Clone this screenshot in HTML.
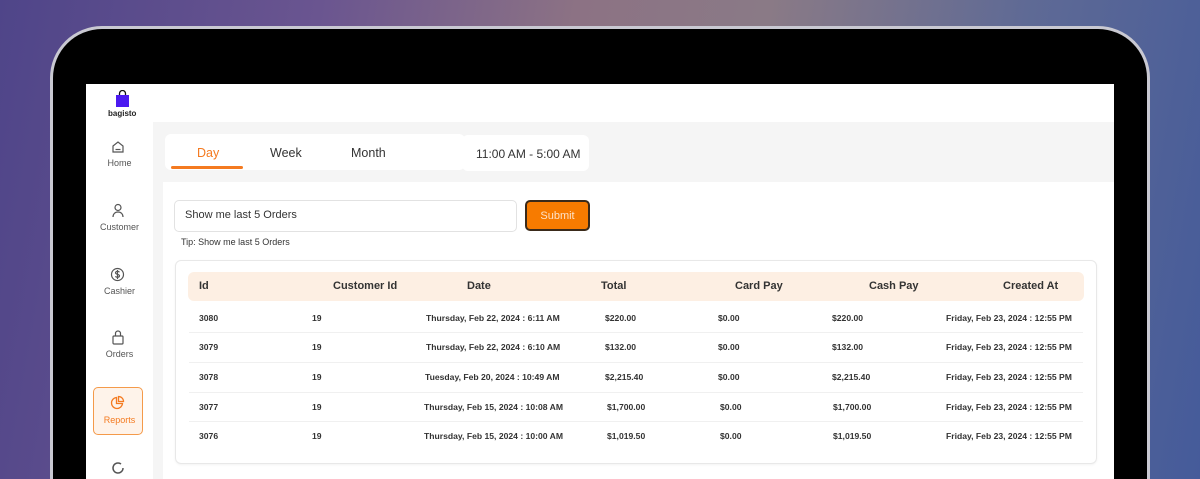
<!DOCTYPE html>
<html style="width:1200px;height:479px;overflow:hidden"><head><meta charset="utf-8"><style>
*{margin:0;padding:0;box-sizing:border-box}
body{width:1200px;height:479px;overflow:hidden;position:relative;font-family:"Liberation Sans",sans-serif;
background:linear-gradient(100deg,#4f4589 0%,#6a5590 25%,#8c7284 45%,#8a7a86 60%,#5f6a95 80%,#455b9a 100%);}
.a{position:absolute;white-space:nowrap}
.bez{left:50px;top:26px;width:1100px;height:453px;border-radius:52px 52px 0 0;background:#000;border:3px solid #c9c9d2;border-bottom:none}
.scr{left:86px;top:84px;width:1028px;height:395px;background:#fff;overflow:hidden}
.th{font-size:11px;font-weight:bold;color:#333}
.td{font-size:8.6px;font-weight:bold;color:#333}
.nav{font-size:9px;color:#555;text-align:center;width:67px}
</style></head><body>
<div class="a bez"></div>
<div class="a scr">
  <div class="a" style="left:29px;top:6px;width:15px;height:16px">
    <svg width="15" height="17" viewBox="0 0 15 17"><path d="M4.5 5V3.5a3 3 0 0 1 6 0V5" stroke="#111" stroke-width="1.3" fill="none"/><rect x="1" y="5" width="13" height="12" fill="#4b1af0"/></svg>
  </div>
  <div class="a" style="left:22px;top:25px;font-size:8px;font-weight:bold;color:#222">bagisto</div>
  <div class="a" style="left:67px;top:38px;width:961px;height:362px;background:#f5f5f5"></div>
  <div class="a" style="left:0;top:38px;width:67px;height:362px;background:#fff"></div>
  <div class="a" style="left:77px;top:98px;width:951px;height:302px;background:#fff"></div>
  <div class="a" style="left:79px;top:50px;width:300px;height:36px;background:#fff;border-radius:6px"></div>
  <div class="a" style="left:376px;top:51px;width:127px;height:36px;background:#fff;border-radius:6px"></div>
  <div class="a" style="left:111px;top:62px;font-size:12.5px;color:#f47a20">Day</div>
  <div class="a" style="left:85px;top:82px;width:72px;height:3px;background:#f47a20;border-radius:2px"></div>
  <div class="a" style="left:184px;top:62px;font-size:12.5px;color:#333">Week</div>
  <div class="a" style="left:265px;top:62px;font-size:12.5px;color:#333">Month</div>
  <div class="a" style="left:390px;top:63px;font-size:12px;color:#333">11:00 AM - 5:00 AM</div>
  <div class="a" style="left:88px;top:116px;width:343px;height:32px;border:1px solid #e2e2e2;border-radius:5px"></div>
  <div class="a" style="left:99px;top:125px;font-size:11px;color:#333">Show me last 5 Orders</div>
  <div class="a" style="left:439px;top:116px;width:65px;height:31px;background:#f77b00;border:2px solid #3a2a1a;border-radius:5px;color:#fde2c8;font-size:11px;text-align:center;line-height:29px">Submit</div>
  <div class="a" style="left:95px;top:153px;font-size:9px;color:#333">Tip: Show me last 5 Orders</div>
  <div class="a" style="left:89px;top:176px;width:922px;height:204px;border:1px solid #e8e8e8;border-radius:6px;box-shadow:0 1px 2px rgba(0,0,0,.05)"></div>
  <div class="a" style="left:102px;top:188px;width:896px;height:29px;background:#fdefe3;border-radius:6px"></div>
  <div class="a th" style="left:113px;top:196px">Id</div>
  <div class="a th" style="left:247px;top:196px">Customer Id</div>
  <div class="a th" style="left:381px;top:196px">Date</div>
  <div class="a th" style="left:515px;top:196px">Total</div>
  <div class="a th" style="left:649px;top:196px">Card Pay</div>
  <div class="a th" style="left:783px;top:196px">Cash Pay</div>
  <div class="a th" style="left:917px;top:196px">Created At</div>

  <div class="a" style="left:103px;top:248px;width:894px;height:1px;background:#f0f0f0"></div>
  <div class="a" style="left:103px;top:278px;width:894px;height:1px;background:#f0f0f0"></div>
  <div class="a" style="left:103px;top:308px;width:894px;height:1px;background:#f0f0f0"></div>
  <div class="a" style="left:103px;top:337px;width:894px;height:1px;background:#f0f0f0"></div>

  <div class="a td" style="left:113px;top:229px">3080</div><div class="a td" style="left:226px;top:229px">19</div><div class="a td" style="left:340px;top:229px">Thursday, Feb 22, 2024 : 6:11 AM</div><div class="a td" style="left:519px;top:229px">$220.00</div><div class="a td" style="left:632px;top:229px">$0.00</div><div class="a td" style="left:746px;top:229px">$220.00</div><div class="a td" style="left:860px;top:229px">Friday, Feb 23, 2024 : 12:55 PM</div>
  <div class="a td" style="left:113px;top:258px">3079</div><div class="a td" style="left:226px;top:258px">19</div><div class="a td" style="left:340px;top:258px">Thursday, Feb 22, 2024 : 6:10 AM</div><div class="a td" style="left:519px;top:258px">$132.00</div><div class="a td" style="left:632px;top:258px">$0.00</div><div class="a td" style="left:746px;top:258px">$132.00</div><div class="a td" style="left:860px;top:258px">Friday, Feb 23, 2024 : 12:55 PM</div>
  <div class="a td" style="left:113px;top:288px">3078</div><div class="a td" style="left:226px;top:288px">19</div><div class="a td" style="left:339px;top:288px">Tuesday, Feb 20, 2024 : 10:49 AM</div><div class="a td" style="left:519px;top:288px">$2,215.40</div><div class="a td" style="left:632px;top:288px">$0.00</div><div class="a td" style="left:746px;top:288px">$2,215.40</div><div class="a td" style="left:860px;top:288px">Friday, Feb 23, 2024 : 12:55 PM</div>
  <div class="a td" style="left:113px;top:318px">3077</div><div class="a td" style="left:226px;top:318px">19</div><div class="a td" style="left:338px;top:318px">Thursday, Feb 15, 2024 : 10:08 AM</div><div class="a td" style="left:521px;top:318px">$1,700.00</div><div class="a td" style="left:634px;top:318px">$0.00</div><div class="a td" style="left:747px;top:318px">$1,700.00</div><div class="a td" style="left:860px;top:318px">Friday, Feb 23, 2024 : 12:55 PM</div>
  <div class="a td" style="left:113px;top:347px">3076</div><div class="a td" style="left:226px;top:347px">19</div><div class="a td" style="left:338px;top:347px">Thursday, Feb 15, 2024 : 10:00 AM</div><div class="a td" style="left:521px;top:347px">$1,019.50</div><div class="a td" style="left:634px;top:347px">$0.00</div><div class="a td" style="left:747px;top:347px">$1,019.50</div><div class="a td" style="left:860px;top:347px">Friday, Feb 23, 2024 : 12:55 PM</div>

  <svg class="a" style="left:25px;top:56px" width="14" height="14" viewBox="0 0 14 14" fill="none" stroke="#555" stroke-width="1.2"><path d="M2 6L7 2l5 4v6H2z"/><path d="M4.5 9.5h5"/></svg>
  <div class="a nav" style="left:0;top:74px">Home</div>
  <svg class="a" style="left:25px;top:119px" width="14" height="15" viewBox="0 0 14 15" fill="none" stroke="#555" stroke-width="1.2"><circle cx="7" cy="4.5" r="3"/><path d="M2 14c0-3 2-5 5-5s5 2 5 5"/></svg>
  <div class="a nav" style="left:0;top:138px">Customer</div>
  <svg class="a" style="left:24px;top:183px" width="15" height="15" viewBox="0 0 15 15" fill="none" stroke="#555" stroke-width="1.2"><circle cx="7.5" cy="7.5" r="6"/><path d="M9.5 5.2c-.5-.6-1.2-.9-2-.9-1.1 0-2 .6-2 1.5 0 2 4 1 4 3 0 .9-.9 1.5-2 1.5-.9 0-1.7-.4-2.1-1M7.5 3v9"/></svg>
  <div class="a nav" style="left:0;top:202px">Cashier</div>
  <svg class="a" style="left:25px;top:246px" width="14" height="15" viewBox="0 0 14 15" fill="none" stroke="#555" stroke-width="1.2"><path d="M4.5 6V3.5a2.5 2.5 0 0 1 5 0V6"/><rect x="2" y="6" width="10" height="8" rx="1"/></svg>
  <div class="a nav" style="left:0;top:265px">Orders</div>
  <div class="a" style="left:7px;top:303px;width:50px;height:48px;border:1.5px solid #f49a4a;border-radius:5px;background:#fef3ea"></div>
  <svg class="a" style="left:24px;top:311px" width="15" height="15" viewBox="0 0 15 15" fill="none" stroke="#f47a20" stroke-width="1.3"><path d="M6.5 2.5a5.5 5.5 0 1 0 6 6h-6z"/><path d="M8.5 1.5a5 5 0 0 1 5 5h-5z"/></svg>
  <div class="a nav" style="left:0;top:331px;color:#f47a20">Reports</div>
  <svg class="a" style="left:25px;top:377px" width="14" height="14" viewBox="0 0 14 14" fill="none" stroke="#555" stroke-width="1.5"><path d="M12 7a5 5 0 1 1-2-4"/></svg>
</div>
</body></html>
